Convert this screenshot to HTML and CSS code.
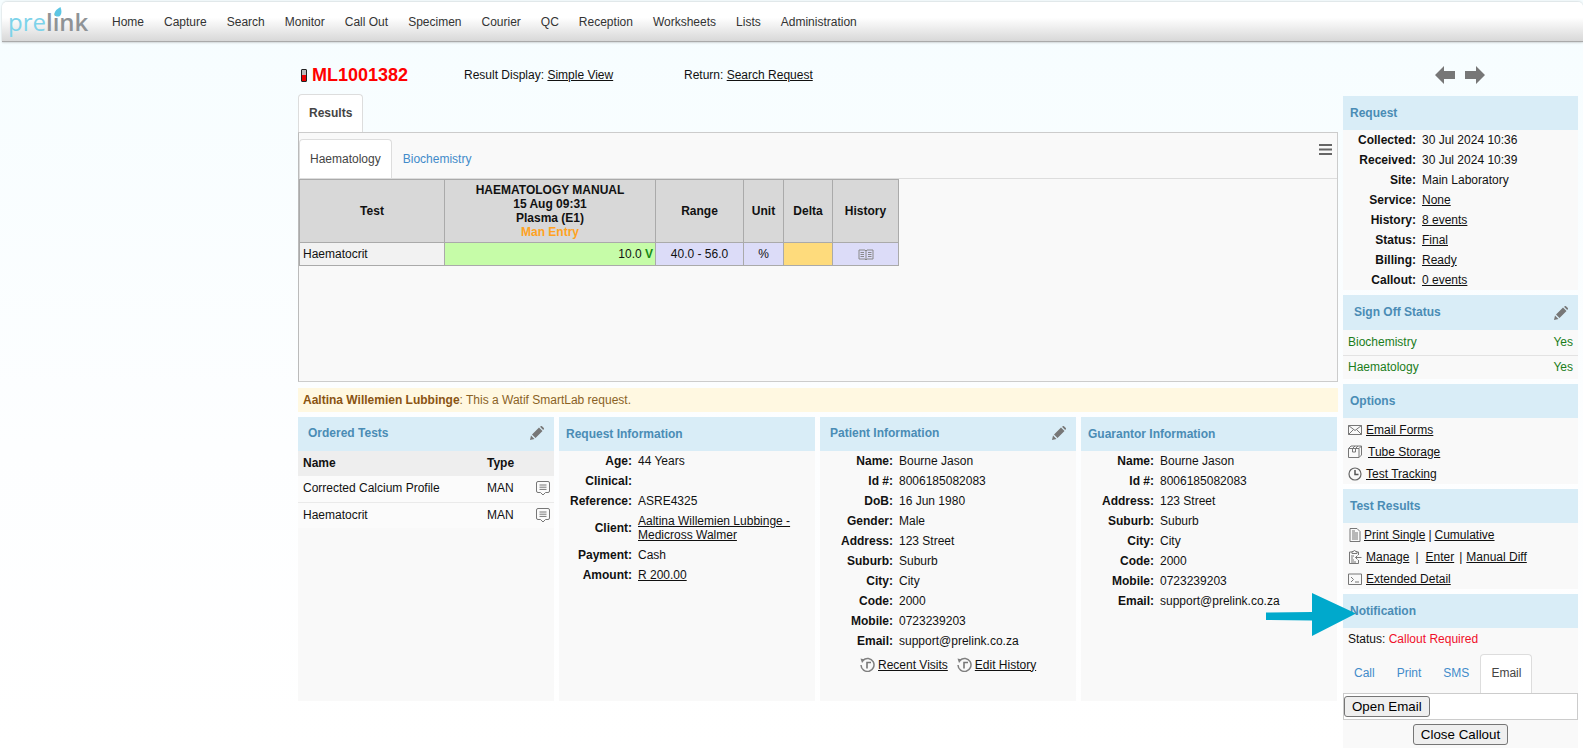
FILE: index.html
```
<!DOCTYPE html>
<html lang="en">
<head>
<meta charset="utf-8">
<title>Prelink</title>
<link rel="stylesheet" href="styles.css">
</head>
<body>
<header class="topbar">
  <div class="logo"><span class="logo-pre">pre</span><span class="logo-link">link</span>
    <svg class="logo-drop" viewBox="0 0 8 10"><path d="M6.500 0C7.600 3.500 8 6 6.300 8.400 4.800 10.200 1.200 10 .5 7.500 0 4.500 3 2 6.500 0z"/></svg>
  </div>
  <nav class="menu">
    <a>Home</a><a>Capture</a><a>Search</a><a>Monitor</a><a>Call Out</a><a>Specimen</a><a>Courier</a><a>QC</a><a>Reception</a><a>Worksheets</a><a>Lists</a><a>Administration</a>
  </nav>
</header>

<div class="page">
  <main class="main">
    <div class="title-row">
      <svg class="tube" viewBox="0 0 6 13"><rect x=".5" y=".5" width="5" height="12" rx=".5" fill="#bbb" stroke="#222"/><rect x="1" y="6" width="4" height="6" fill="#e00"/></svg>
      <span class="lab-no">ML1001382</span>
      <span class="title-item first">Result Display: <a class="lnk">Simple View</a></span>
      <span class="title-item second">Return: <a class="lnk">Search Request</a></span>
    </div>

    <div class="tabs outer-tabs"><span class="tab active bold">Results</span></div>
    <section class="results">
      <div class="tabs inner-tabs">
        <span class="tab active">Haematology</span><span class="tab">Biochemistry</span>
        <svg class="burger" viewBox="0 0 13 11"><path d="M0 1h13M0 5.500h13M0 10h13" stroke="#666" stroke-width="2"/></svg>
      </div>
      <table class="grid">
        <colgroup><col class="c1"><col class="c2"><col class="c3"><col class="c4"><col class="c5"><col class="c6"></colgroup>
        <thead>
          <tr><th>Test</th><th>HAEMATOLOGY MANUAL<br>15 Aug 09:31<br>Plasma (E1)<br><span class="man">Man Entry</span></th><th>Range</th><th>Unit</th><th>Delta</th><th>History</th></tr>
        </thead>
        <tbody>
          <tr>
            <td class="name">Haematocrit</td>
            <td class="val">10.0 <b>V</b></td>
            <td class="lilac">40.0 - 56.0</td>
            <td class="lilac">%</td>
            <td class="delta"></td>
            <td class="lilac"><svg class="ico book" viewBox="0 0 16 12"><path d="M1 1h6l1 1 1-1h6v9H9l-1 1-1-1H1zM8 2v8M2.500 3.500h3.500M2.500 5.500h3.500M2.500 7.500h3.500M10 3.500h3.500M10 5.500h3.500M10 7.500h3.500" fill="none" stroke="#888"/></svg></td>
          </tr>
        </tbody>
      </table>
    </section>

    <div class="alert"><b>Aaltina Willemien Lubbinge</b>: This a Watif SmartLab request.</div>

    <div class="boxes">
      <section class="box">
        <h3 class="box-head"><span class="t-tests">Ordered Tests</span><svg class="pencil" viewBox="0 0 14 14"><use href="#pen"/></svg></h3>
        <table class="ordered">
          <colgroup><col class="o1"><col class="o2"><col></colgroup>
          <thead><tr><th>Name</th><th>Type</th><th></th></tr></thead>
          <tbody>
            <tr><td>Corrected Calcium Profile</td><td>MAN</td><td><svg class="ico note" viewBox="0 0 14 15"><use href="#note"/></svg></td></tr>
            <tr><td>Haematocrit</td><td>MAN</td><td><svg class="ico note" viewBox="0 0 14 15"><use href="#note"/></svg></td></tr>
          </tbody>
        </table>
      </section>

      <section class="box">
        <h3 class="box-head"><span>Request Information</span></h3>
        <dl class="kv">
          <dt>Age:</dt><dd>44 Years</dd>
          <dt>Clinical:</dt><dd></dd>
          <dt>Reference:</dt><dd>ASRE4325</dd>
          <dt>Client:</dt><dd><a class="lnk">Aaltina Willemien Lubbinge - Medicross Walmer</a></dd>
          <dt>Payment:</dt><dd>Cash</dd>
          <dt>Amount:</dt><dd><a class="lnk">R 200.00</a></dd>
        </dl>
      </section>

      <section class="box">
        <h3 class="box-head"><span class="t-pat">Patient Information</span><svg class="pencil" viewBox="0 0 14 14"><use href="#pen"/></svg></h3>
        <dl class="kv">
          <dt>Name:</dt><dd>Bourne Jason</dd>
          <dt>Id #:</dt><dd>8006185082083</dd>
          <dt>DoB:</dt><dd>16 Jun 1980</dd>
          <dt>Gender:</dt><dd>Male</dd>
          <dt>Address:</dt><dd>123 Street</dd>
          <dt>Suburb:</dt><dd>Suburb</dd>
          <dt>City:</dt><dd>City</dd>
          <dt>Code:</dt><dd>2000</dd>
          <dt>Mobile:</dt><dd>0723239203</dd>
          <dt>Email:</dt><dd>support@prelink.co.za</dd>
        </dl>
        <div class="visits">
          <svg class="ico hist" viewBox="0 0 15 15"><use href="#hist"/></svg><a class="lnk">Recent Visits</a>
          <svg class="ico hist second-hist" viewBox="0 0 15 15"><use href="#hist"/></svg><a class="lnk">Edit History</a>
        </div>
      </section>

      <section class="box">
        <h3 class="box-head"><span class="t-guar">Guarantor Information</span></h3>
        <dl class="kv">
          <dt>Name:</dt><dd>Bourne Jason</dd>
          <dt>Id #:</dt><dd>8006185082083</dd>
          <dt>Address:</dt><dd>123 Street</dd>
          <dt>Suburb:</dt><dd>Suburb</dd>
          <dt>City:</dt><dd>City</dd>
          <dt>Code:</dt><dd>2000</dd>
          <dt>Mobile:</dt><dd>0723239203</dd>
          <dt>Email:</dt><dd>support@prelink.co.za</dd>
        </dl>
      </section>
    </div>
  </main>

  <aside class="side">
    <div class="nav-arrows">
      <svg viewBox="0 0 20 20"><path d="M0 10 9 1v5h11v8H9v5z"/></svg>
      <svg viewBox="0 0 20 20"><path d="M20 10 11 1v5H0v8h11v5z"/></svg>
    </div>

    <section class="card">
      <h3 class="box-head"><span>Request</span></h3>
      <dl class="kv">
        <dt>Collected:</dt><dd>30 Jul 2024 10:36</dd>
        <dt>Received:</dt><dd>30 Jul 2024 10:39</dd>
        <dt>Site:</dt><dd>Main Laboratory</dd>
        <dt>Service:</dt><dd><a class="lnk">None</a></dd>
        <dt>History:</dt><dd><a class="lnk">8 events</a></dd>
        <dt>Status:</dt><dd><a class="lnk">Final</a></dd>
        <dt>Billing:</dt><dd><a class="lnk">Ready</a></dd>
        <dt>Callout:</dt><dd><a class="lnk">0 events</a></dd>
      </dl>
    </section>

    <section class="card">
      <h3 class="box-head head-sign"><span class="t-sign">Sign Off Status</span><svg class="pencil pencil-side" viewBox="0 0 14 14"><use href="#pen"/></svg></h3>
      <div class="sign"><span>Biochemistry</span><span>Yes</span></div>
      <div class="sign"><span>Haematology</span><span>Yes</span></div>
    </section>

    <section class="card">
      <h3 class="box-head"><span>Options</span></h3>
      <div class="act">
        <svg class="ico" viewBox="0 0 14 14"><path d="M.5 2.500h13v9H.5zM.5 2.500l6.500 5 6.500-5M.5 11.500l5-5M13.500 11.500l-5-5" fill="none" stroke="#777"/></svg><a class="lnk">Email Forms</a>
      </div>
      <div class="act">
        <svg class="ico" viewBox="0 0 14 14"><path d="M.5 3.500 3 1h10.500v9L11 12.500H.5zM.5 3.500H11v9M11 3.500 13.500 1M4.500 3.500 7 1M7.500 3.500 10 1M4.500 3.500V7h3V3.500" fill="none" stroke="#777"/></svg><a class="lnk wide">Tube Storage</a>
      </div>
      <div class="act">
        <svg class="ico" viewBox="0 0 14 14"><circle cx="7" cy="7" r="6" fill="none" stroke="#666" stroke-width="1.200"/><path d="M7 3v4.500h3.500" fill="none" stroke="#555" stroke-width="1.500"/></svg><a class="lnk">Test Tracking</a>
      </div>
    </section>

    <section class="card">
      <h3 class="box-head"><span>Test Results</span></h3>
      <div class="act">
        <svg class="ico ico-doc" viewBox="0 0 14 14"><path d="M2 .5h7l3 3v10H2zM4 5h6M4 7h6M4 9h6M4 11h6M4 3h3" fill="none" stroke="#777"/></svg><a class="lnk">Print Single</a><span class="sep s1">|</span><a class="lnk">Cumulative</a>
      </div>
      <div class="act">
        <svg class="ico" viewBox="0 0 14 14"><path d="M4 2H1.500v11.500h9V10M9 2h1.500v3M4 1.500h1.500a1 1 0 0 1 2 0H9V3.500H4zM3 6h3M3 8h2M3 10h3M3 12h5M13.500 7.500H7.500M9.500 5.500l-2 2 2 2" fill="none" stroke="#777"/></svg><a class="lnk">Manage</a><span class="sep s2">|</span><a class="lnk">Enter</a><span class="sep s3">|</span><a class="lnk">Manual Diff</a>
      </div>
      <div class="act">
        <svg class="ico" viewBox="0 0 14 14"><path d="M.5 2h13v10.500H.5zM3 5l2.500 2.500L3 10M7 10h4" fill="none" stroke="#777"/></svg><a class="lnk">Extended Detail</a>
      </div>
    </section>

    <section class="card">
      <h3 class="box-head"><span>Notification</span></h3>
      <div class="status">Status: <span class="req">Callout Required</span></div>
      <div class="tabs notif-tabs">
        <span class="tab">Call</span><span class="tab">Print</span><span class="tab">SMS</span><span class="tab active">Email</span>
      </div>
      <div class="notif-body"><button class="btn" type="button">Open Email</button></div>
      <div class="notif-foot"><button class="btn" type="button">Close Callout</button></div>
    </section>
  </aside>
</div>

<svg class="callout-arrow" viewBox="0 0 90 44"><path d="M0 19.500 46 19V0l44 20.500L46 43V27.500L0 27z"/></svg>

<svg class="defs" aria-hidden="true">
  <defs>
    <g id="pen"><path d="M0 14l1-4.500 3.500 3.500zM2 8.500 9 1.500l3.500 3.500-7 7zM10 .8l.8-.6a1 1 0 0 1 1.200 0l1.800 1.800a1 1 0 0 1 0 1.200l-.6.800z" fill="#777"/></g>
    <g id="note"><path d="M2 .5h10a1.500 1.500 0 0 1 1.500 1.500v8a1.500 1.500 0 0 1-1.500 1.500H9.500L7 14l-2.500-2.500H2A1.500 1.500 0 0 1 .5 10V2A1.500 1.500 0 0 1 2 .5zM3.500 4h7M3.500 6.200h7M3.500 8.400h7" fill="none" stroke="#777"/></g>
    <g id="hist"><path d="M3 3.200A6.500 6.500 0 1 1 1 8" fill="none" stroke="#808080" stroke-width="1.500"/><path d="M.5 1.500 5 2.500 2 6z" fill="#808080"/><path d="M11 5.500H7v6" fill="none" stroke="#777" stroke-width="1.600"/></g>
  </defs>
</svg>
</body>
</html>
```
FILE: styles.css
```
* { box-sizing: border-box; }
html, body { margin: 0; padding: 0; }
body {
  position: relative;
  height: 750px;
  overflow: hidden;
  font: 12px/14px "Liberation Sans", Arial, sans-serif;
  color: #111;
  background: linear-gradient(#f6fdff 0, #fdfeff 60%, #fff 100%);
}
.defs { width: 0; height: 0; position: absolute; }
a { color: inherit; }
.lnk { color: #111; text-decoration: underline; }
h3 { margin: 0; font-size: 12px; }

/* top bar */
.topbar {
  display: flex;
  align-items: center;
  height: 40px;
  margin: 2px 0 0 2px;
  border-radius: 5px 5px 0 0;
  border-bottom: 1px solid #aaa;
  background: linear-gradient(#fff 0, #fff 40%, #d8d8d8 100%);
  box-shadow: 0 1px 2px rgba(0,0,0,.15), 0 -1px 2px rgba(0,0,0,.1);
}
.logo {
  position: relative;
  width: 110px;
  padding-left: 6px;
  font: 400 24px/36px "Open Sans", sans-serif;
  white-space: nowrap;
}
.logo-pre { color: #7dd3ea; }
.logo-link { color: #8f9396; font-weight: 600; }
.logo-drop { position: absolute; left: 52px; top: 3px; width: 8px; height: 10px; fill: #5cc6e4; }
.menu { display: flex; gap: 20px; color: #333; }

/* layout */
.page { display: flex; padding-left: 298px; }
.main { width: 1040px; }
.side { width: 235px; margin-left: 5px; }

/* title row */
.title-row { display: flex; align-items: center; height: 52px; padding: 14px 0 0 3px; }
.tube { width: 6px; height: 13px; margin-right: 5px; }
.lab-no { width: 152px; font-size: 18px; font-weight: bold; color: #f00; }
.title-item.first { width: 220px; }

/* tabs */
.tabs { display: flex; }
.tab {
  padding: 12px 10px;
  border: 1px solid transparent;
  border-bottom: 0;
  color: #428bca;
}
.tab.active {
  background: #fff;
  color: #444;
  border-color: #ddd;
  border-radius: 4px 4px 0 0;
}
.tab.bold { font-weight: bold; padding: 11px 10px; }
.outer-tabs { height: 38px; }
.results {
  height: 250px;
  padding-top: 6px;
  background: #f9f9f9;
  border: 1px solid #ccc;
  border-left: 1px solid #bbb;
}
.inner-tabs {
  position: relative;
  height: 40px;
  border-bottom: 1px solid #ddd;
}
.burger { position: absolute; right: 5px; top: 5px; width: 13px; height: 11px; }

/* result grid */
.grid { table-layout: fixed; width: 599px; border-collapse: collapse; text-align: center; }
.c1 { width: 145px; } .c2 { width: 211px; } .c3 { width: 88px; }
.c4 { width: 40px; } .c5 { width: 49px; } .c6 { width: 66px; }
.grid th, .grid td { border: 1px solid #aaa; padding: 0; }
.grid th { height: 63px; background: #d8d8d8; color: #111; }
.grid td { height: 23px; }
.man { color: #ffa21f; }
.grid .name { text-align: left; padding-left: 3px; background: #f2f2f2; }
.grid .val { text-align: right; padding-right: 2px; background: #c6fca8; }
.val b { color: #168a16; }
.lilac { background: #dcdcf8; }
.delta { background: #fedb7c; }
.ico { flex: none; display: inline-block; width: 14px; height: 14px; }
.book { width: 16px; height: 12px; vertical-align: middle; }

/* alert */
.alert {
  height: 24px;
  margin-top: 6px;
  padding: 5px 5px;
  background: #fff8e1;
  color: #8a6225;
}
.alert b { color: #8a5412; }

/* lower boxes */
.boxes { display: grid; grid-template-columns: repeat(4, 256px); gap: 5px; margin-top: 5px; height: 284px; }
.box { background: #f9f9f9; }
.box-head {
  display: flex;
  align-items: center;
  justify-content: space-between;
  height: 34px;
  padding: 0 10px 0 7px;
  background: #d9edf7;
  color: #4a8cb5;
}
.head-sign { height: 35px; }
.t-tests { padding: 0 0 3px 3px; }
.t-pat { padding: 0 0 2px 3px; }
.t-sign { padding: 0 0 2px 4px; }
.pencil { width: 14px; height: 14px; margin-bottom: 2px; }
.pencil-side { margin-bottom: 0; }

/* key/value lists */
.kv { display: grid; grid-template-columns: 73px 1fr; column-gap: 6px; margin: 0; }
.kv dt { padding: 3px 0; font-weight: bold; text-align: right; align-self: center; }
.kv dd { margin: 0; padding: 3px 8px 3px 0; min-height: 20px; }

/* ordered tests */
.ordered { width: 100%; table-layout: fixed; border-collapse: collapse; }
.o1 { width: 189px; } .o2 { width: 49px; }
.ordered th { height: 25px; background: #eee; text-align: left; padding: 0 0 2px 5px; }
.ordered td { height: 26px; padding: 0 0 1px 5px; background: #fbfbfb; border-bottom: 1px solid #eaeaea; }
.ordered tr:last-child td { border-bottom: 0; }
.ordered td:last-child { padding: 3px 0 0 0; }
.ordered th:nth-child(2), .ordered td:nth-child(2) { padding-left: 0; }
.note { width: 14px; height: 15px; }

.visits { display: flex; align-items: center; margin: 6px 0 0 40px; }
.visits .hist { width: 15px; height: 15px; margin-right: 3px; }
.visits .second-hist { margin-left: 9px; }

/* sidebar */
.nav-arrows { display: flex; gap: 10px; justify-content: center; height: 54px; padding: 23px 0 0 0; margin-left: -1px; }
.nav-arrows svg { width: 20px; height: 20px; fill: #777; }
.card { background: #f9f9f9; margin-bottom: 5px; }
.sign {
  display: flex;
  justify-content: space-between;
  height: 25px;
  padding: 5px 5px;
  color: #1b7d1b;
}
.sign + .sign { height: 24px; padding-top: 4px; border-top: 1px solid #e3e3e3; }
.act { display: flex; align-items: center; height: 22px; padding: 2px 0 0 5px; }
.act .ico { margin-right: 4px; }
.act .ico-doc { margin-right: 2px; }
.act .wide { margin-left: 2px; }
.sep.s1 { margin: 0 3px; }
.sep.s2 { margin: 0 7px 0 6px; }
.sep.s3 { margin: 0 4px 0 5px; }
.status { height: 26px; padding: 4px 5px; }
.req { color: #f0102a; }
.notif-tabs { height: 39px; }
.notif-tabs .tab { padding-top: 11px; }
.notif-body { height: 27px; padding: 2px 0; background: #fff; border: 1px solid #ccc; }
.notif-foot { height: 28px; padding-top: 4px; text-align: center; }
.btn {
  height: 21px;
  padding: 0 7px;
  font: 13.333px "Liberation Sans", Arial, sans-serif;
  color: #000;
  background: #efefef;
  border: 1px solid #767676;
  border-radius: 3px;
}

/* annotation arrow drawn on the screenshot */
.callout-arrow { position: absolute; left: 1266px; top: 593px; width: 90px; height: 44px; fill: #00a9cc; }
```
